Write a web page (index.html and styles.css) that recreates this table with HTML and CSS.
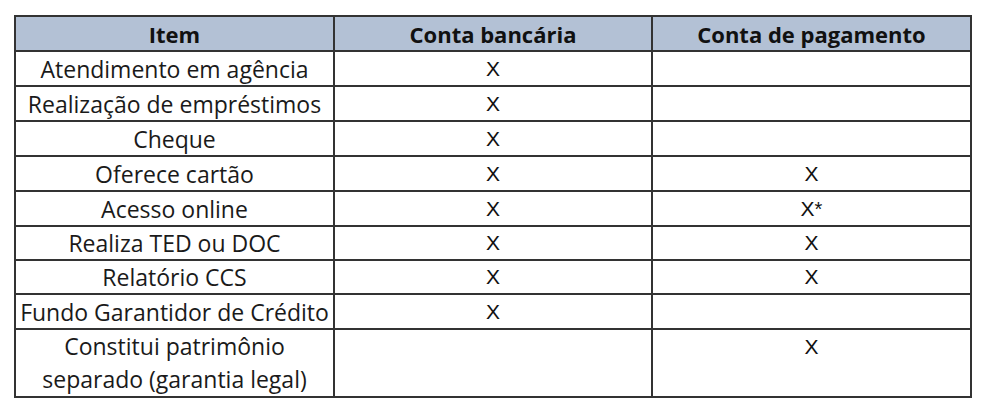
FILE: index.html
```html
<!DOCTYPE html>
<html lang="pt-BR">
<head>
<meta charset="utf-8">
<title>Conta bancária x Conta de pagamento</title>
<link rel="stylesheet" href="styles.css">
</head>
<body>
<table class="cmp">
  <colgroup><col class="c1"><col class="c2"><col class="c3"></colgroup>
  <thead>
    <tr class="head"><th>Item</th><th>Conta bancária</th><th>Conta de pagamento</th></tr>
  </thead>
  <tbody>
    <tr><td class="item">Atendimento em agência</td><td class="x">X</td><td class="x"></td></tr>
    <tr><td class="item">Realização de empréstimos</td><td class="x">X</td><td class="x"></td></tr>
    <tr><td class="item">Cheque</td><td class="x">X</td><td class="x"></td></tr>
    <tr><td class="item">Oferece cartão</td><td class="x">X</td><td class="x">X</td></tr>
    <tr><td class="item">Acesso online</td><td class="x">X</td><td class="x">X<span class="ast">*</span></td></tr>
    <tr class="short"><td class="item">Realiza TED ou DOC</td><td class="x">X</td><td class="x">X</td></tr>
    <tr class="short"><td class="item">Relatório CCS</td><td class="x">X</td><td class="x">X</td></tr>
    <tr><td class="item">Fundo Garantidor de Crédito</td><td class="x">X</td><td class="x"></td></tr>
    <tr class="tall"><td class="item two">Constitui patrimônio<br>separado (garantia legal)</td><td class="x"></td><td class="x top">X</td></tr>
  </tbody>
</table>
</body>
</html>
```
FILE: styles.css
```css
html, body { background: #ffffff; }
body { margin: 0; padding: 15px 0 0 14px; }
.cmp {
  border-collapse: collapse;
  width: 956px;
  table-layout: fixed;
  font-family: "Open Sans", "Liberation Sans", sans-serif;
  color: #1a1a1a;
}
.c1 { width: 319px; }
.c2 { width: 318px; }
.c3 { width: 319px; }
.cmp th, .cmp td {
  border: 2px solid #333333;
  padding: 0;
  text-align: center;
  vertical-align: middle;
}
.head { height: 35px; background: #b3c1d5; }
.head th { font-size: 22px; font-weight: 700; color: #111111; line-height: 26px; }
tbody tr { height: 35px; }
tbody tr.short { height: 34px; }
tbody tr.tall { height: 68px; }
.item { font-size: 23px; line-height: 26px; color: #1a1a1a; white-space: nowrap; }
.item.two { line-height: 33px; }
.x { font-family: "Liberation Sans", Arial, sans-serif; font-size: 21px; line-height: 26px; color: #111111; }
.x.top { vertical-align: top; line-height: 33px; }
.ast { font-size: 20px; }
```
